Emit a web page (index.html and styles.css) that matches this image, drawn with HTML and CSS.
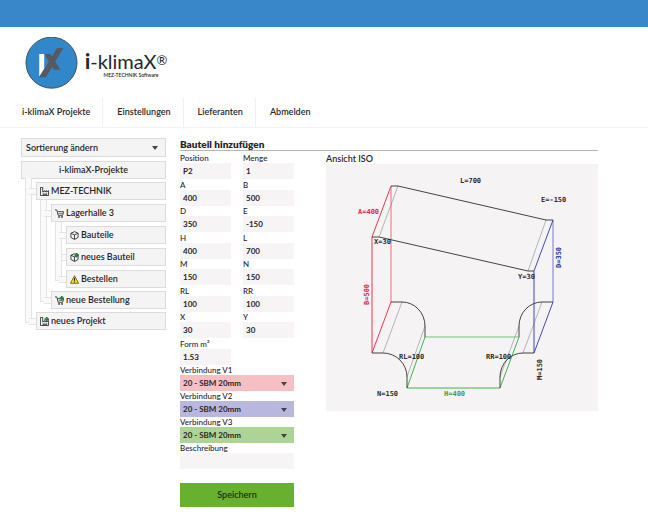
FILE: index.html
```html
<!DOCTYPE html>
<html lang="de">
<head>
  <meta charset="UTF-8" />
  <meta name="viewport" content="width=device-width, initial-scale=1.0" />
  <title>i-klimaX</title>
  <link rel="stylesheet" href="styles.css">
</head>
<body>

  <!-- shared icon shapes -->
  <svg class="sprite" aria-hidden="true">
    <symbol id="factory" viewBox="0 0 10 10">
      <path d="M0.5 0.5v9h9v-5.5l-2 1.5v-1.5l-2 1.5v-1.5l-2.5 1.5v-5z" fill="none" stroke="#333" />
      <path d="M3 7h1M5 7h1M7 7h1M3 8.5h5" stroke="#333" />
    </symbol>
    <symbol id="cart" viewBox="0 0 10 10">
      <path d="M0 1h2l1.5 6h5l1-4h-6.5" fill="none" stroke="#333" />
      <path d="M4 5h5" stroke="#777" />
      <circle cx="4.5" cy="8.8" r="1" fill="#333" />
      <circle cx="7.8" cy="8.8" r="1" fill="#333" />
    </symbol>
    <symbol id="cube" viewBox="0 0 10 10">
      <path d="M1 2.5l4-1.8l4 1.8v4.7l-4 2.2l-4-2.2zM1 2.5l4 1.8l4-1.8M5 4.3v5" fill="none" stroke="#333" stroke-linejoin="round" />
    </symbol>
    <symbol id="plus" viewBox="0 0 10 10">
      <path d="M7.5 0v5M5 2.5h5" stroke="#24803a" stroke-width="2" />
    </symbol>
    <symbol id="warning" viewBox="0 0 10 10">
      <path d="M5 0.8l4.5 8.4h-9z" fill="#f5e51b" stroke="#6b6716" stroke-linejoin="round" />
      <path d="M5 3v3.4M5 7.2v1.2" stroke="#222" stroke-width="1.2" />
    </symbol>
  </svg>

  <div class="topbar"></div>

  <header class="header">
    <svg class="logo" viewBox="0 0 160 156" aria-hidden="true">
      <circle cx="80" cy="77" r="77" fill="#3087ca" stroke="#45505a" stroke-width="3" />
      <path d="M43 51h15v44l-15 24z" fill="#fff" />
      <path d="M97 33h19l-53 88h-20z" fill="#565a60" />
      <path d="M59 51h18l30 47h-20z" fill="#565a60" />
    </svg>
    <div class="brand">
      <span class="brand-name"><b>i</b>-klimaX<span class="reg">®</span></span>
      <span class="brand-sub">MEZ-TECHNIK Software</span>
    </div>
  </header>

  <nav class="nav">
    <a href="#projekte">i-klimaX Projekte</a>
    <a href="#einstellungen">Einstellungen</a>
    <a href="#lieferanten">Lieferanten</a>
    <a href="#abmelden">Abmelden</a>
  </nav>

  <main class="page">
    <aside class="sidebar">
      <div class="select sort">
        <select aria-label="Sortierung ändern">
          <option>Sortierung ändern</option>
        </select>
      </div>
      <a class="node root" href="#projekte">i-klimaX-Projekte</a>
      <ul class="tree">
        <li>
          <a class="node" href="#mez"><svg><use href="#factory" /></svg>MEZ-TECHNIK</a>
          <ul class="tree">
            <li>
              <a class="node" href="#lagerhalle"><svg><use href="#cart" /></svg>Lagerhalle 3</a>
              <ul class="tree leaves">
                <li><a class="node" href="#bauteile"><svg><use href="#cube" /></svg>Bauteile</a></li>
                <li><a class="node" href="#neues-bauteil"><svg><use href="#cube" /><use href="#plus" /></svg>neues Bauteil</a></li>
                <li><a class="node" href="#bestellen"><svg><use href="#warning" /></svg>Bestellen</a></li>
              </ul>
            </li>
            <li><a class="node" href="#neue-bestellung"><svg><use href="#cart" /><use href="#plus" /></svg>neue Bestellung</a></li>
          </ul>
        </li>
        <li><a class="node" href="#neues-projekt"><svg><use href="#factory" /><use href="#plus" /></svg>neues Projekt</a></li>
      </ul>
    </aside>

    <section class="content">
      <h1>Bauteil hinzufügen</h1>
      <div class="columns">
        <form class="form">
          <div class="fields">
            <div class="field"><label for="position">Position</label><input id="position" value="P2"></div>
            <div class="field"><label for="menge">Menge</label><input id="menge" value="1"></div>
            <div class="field"><label for="a">A</label><input id="a" value="400"></div>
            <div class="field"><label for="b">B</label><input id="b" value="500"></div>
            <div class="field"><label for="d">D</label><input id="d" value="350"></div>
            <div class="field"><label for="e">E</label><input id="e" value="-150"></div>
            <div class="field"><label for="h">H</label><input id="h" value="400"></div>
            <div class="field"><label for="l">L</label><input id="l" value="700"></div>
            <div class="field"><label for="m">M</label><input id="m" value="150"></div>
            <div class="field"><label for="n">N</label><input id="n" value="150"></div>
            <div class="field"><label for="rl">RL</label><input id="rl" value="100"></div>
            <div class="field"><label for="rr">RR</label><input id="rr" value="100"></div>
            <div class="field"><label for="x">X</label><input id="x" value="30"></div>
            <div class="field"><label for="y">Y</label><input id="y" value="30"></div>
            <div class="field"><label for="form">Form m²</label><input id="form" value="1.53"></div>
          </div>
          <div class="field">
            <label for="v1">Verbindung V1</label>
            <div class="select red"><select id="v1"><option>20 - SBM 20mm</option></select></div>
          </div>
          <div class="field">
            <label for="v2">Verbindung V2</label>
            <div class="select blue"><select id="v2"><option>20 - SBM 20mm</option></select></div>
          </div>
          <div class="field">
            <label for="v3">Verbindung V3</label>
            <div class="select green"><select id="v3"><option>20 - SBM 20mm</option></select></div>
          </div>
          <div class="field">
            <label for="beschreibung">Beschreibung</label>
            <input id="beschreibung" value="">
          </div>
          <button class="save" type="button">Speichern</button>
        </form>

        <figure class="view">
          <figcaption>Ansicht ISO</figcaption>
          <svg class="iso" viewBox="0 0 272 247">
            <g class="thin">
              <path d="M72 22L53 73M220 56L202 107M76 138L57 189M99 162L81 213M216 138L197 189M193 162L174 213" />
            </g>
            <g class="line-red">
              <path class="back" d="M65 22V138" />
              <path d="M65 22L46 73V189L65 138" />
            </g>
            <g class="line-green">
              <path class="back" d="M99 173H193" />
              <path d="M99 173L81 224H174L193 173" />
            </g>
            <g class="line-blue">
              <path class="back" d="M227 56V138" />
              <path d="M227 56L208 107V189L227 138" />
            </g>
            <g class="line-black">
              <path d="M65 22H72L220 56H227M46 73H53L202 107H208" />
              <path d="M65 138H76A23 24 0 0 1 99 162V173M46 189H57A24 24 0 0 1 81 213V224" />
              <path d="M227 138H216A23 24 0 0 0 193 162V173M208 189H197A23 24 0 0 0 174 213V224" />
            </g>
            <text x="134" y="19">L=700</text>
            <text x="215" y="38">E=-150</text>
            <text x="48" y="80">X=30</text>
            <text x="192" y="115">Y=30</text>
            <text x="73" y="195">RL=100</text>
            <text x="160" y="195">RR=100</text>
            <text x="51" y="232">N=150</text>
            <text class="text-red" x="32" y="50">A=400</text>
            <text class="text-green" x="118" y="232">H=400</text>
            <text class="text-red" transform="translate(43 141) rotate(-90)">B=500</text>
            <text class="text-blue" transform="translate(235 104) rotate(-90)">D=350</text>
            <text transform="translate(216 216) rotate(-90)">M=150</text>
          </svg>
        </figure>
      </div>
    </section>
  </main>

</body>
</html>
```
FILE: styles.css
```css
* {
  margin: 0;
  padding: 0;
  box-sizing: border-box;
}
body {
  font-family: Lato, sans-serif;
  font-size: 9px;
  font-weight: 600;
  line-height: 10px;
  color: #26262b;
  background: #fff;
}
a {
  color: inherit;
  text-decoration: none;
}
input, select, button {
  font: inherit;
  color: inherit;
  border: none;
  border-radius: 0;
}
.sprite {
  display: none;
}
.topbar {
  height: 27px;
  background: #3986c9;
}

/* header */
.header {
  display: flex;
  align-items: center;
  gap: 7px;
  padding: 10px 25px 9px;
}
.logo {
  width: 53px;
  height: 52px;
}
.brand {
  display: flex;
  flex-direction: column;
  padding-top: 2px;
}
.brand-name {
  font-size: 20px;
  font-weight: 400;
  line-height: 23px;
}
.brand-name b {
  font-weight: 900;
}
.reg {
  font-size: 13px;
  line-height: 13px;
  vertical-align: 4px;
}
.brand-sub {
  align-self: flex-end;
  font-size: 5px;
  line-height: 5px;
  padding-right: 9px;
}
.nav {
  display: flex;
  padding: 0 8px;
  border-bottom: 1px solid #f3f3f3;
}
.nav a {
  padding: 9px 12px 10px 14px;
  border-right: 1px solid #f0f0f0;
}
.nav a:last-child {
  border-right: none;
}

/* page */
.page {
  display: flex;
  gap: 14px;
  padding: 10px 50px 20px 21px;
}
.sidebar {
  width: 145px;
  flex: none;
}
.select {
  position: relative;
  background: #f5f4f5;
}
.select select {
  display: block;
  width: 100%;
  height: 16px;
  padding: 0 16px 0 3px;
  background: none;
  appearance: none;
}
.select::after {
  content: "";
  position: absolute;
  top: 7px;
  right: 7px;
  border: 3px solid transparent;
  border-top: 4px solid #444;
  border-bottom: none;
  pointer-events: none;
}
.sort {
  margin-bottom: 4px;
  border: 1px solid #dcdcdc;
}
.sort select {
  height: 17px;
  padding-left: 4px;
}
.node {
  display: flex;
  align-items: center;
  gap: 2px;
  height: 18px;
  padding: 0 3px;
  background: #f5f4f5;
  border: 1px solid #dcdcdc;
}
.node svg {
  width: 9px;
  height: 9px;
}
.root {
  justify-content: center;
}
.tree {
  display: flex;
  flex-direction: column;
  gap: 3px;
  padding: 4px 0 0 15px;
  list-style: none;
}
.root + .tree {
  padding-top: 3px;
}
.leaves {
  gap: 4px;
}
.tree li {
  position: relative;
}
/* connector pipes between the nodes */
.tree li::before,
.tree li::after {
  content: "";
  position: absolute;
  background: #fafafa;
  border: 1px solid #e4e4e4;
}
.tree li::before {
  left: -11px;
  top: -4px;
  width: 5px;
  height: 15px;
  border-top: none;
}
.tree li:last-child::before {
  top: auto;
  bottom: 7px;
}
.tree > li:last-child:not(:first-child)::before {
  height: 28px;
}
.tree li::after {
  left: -7px;
  top: 6px;
  width: 7px;
  height: 5px;
  border-width: 1px 0;
}
.tree > li:first-child:not(:last-child)::before {
  height: auto;
  bottom: -8px;
}

/* form */
.content {
  flex: 1;
  min-width: 0;
}
h1 {
  font-size: 10px;
  font-weight: 800;
  line-height: 12px;
  border-bottom: 1px solid #b5b5b5;
}
.columns {
  display: flex;
  align-items: flex-start;
  gap: 32px;
}
.form {
  width: 114px;
  flex: none;
  padding-top: 2px;
}
.fields {
  display: grid;
  grid-template-columns: 1fr 1fr;
  grid-auto-rows: 1fr;
  column-gap: 12px;
  min-height: 212px;
}
label {
  display: block;
  font-size: 8px;
  font-weight: 500;
}
.field input,
.field select {
  font-size: 8px;
  font-weight: 700;
}
.field input {
  display: block;
  width: 100%;
  height: 16px;
  padding: 0 3px;
  background: #f6f4f5;
}
.red {
  background: #f6bfc3;
}
.blue {
  background: #bab7df;
}
.green {
  background: #add494;
}
.save {
  width: 100%;
  height: 24px;
  margin-top: 14px;
  background: #68b12e;
  cursor: pointer;
}

/* iso view */
.view {
  flex: 1;
  min-width: 0;
  padding-top: 3px;
}
figcaption {
  font-size: 9px;
}
.iso {
  display: block;
  width: 100%;
  background: #f5f3f4;
}
.iso path {
  fill: none;
  stroke-width: 1;
}
.iso .back {
  opacity: 0.7;
}
.thin {
  stroke: #b5b5b5;
}
.line-red {
  stroke: #e8384f;
}
.line-green {
  stroke: #3fb54a;
}
.line-blue {
  stroke: #4348b0;
}
.line-black {
  stroke: #444;
}
.iso text {
  font-family: "DejaVu Sans Mono", monospace;
  font-size: 7px;
  font-weight: 700;
  fill: #2b2b2b;
}
.iso .text-red {
  fill: #e0283f;
}
.iso .text-green {
  fill: #2fa83c;
}
.iso .text-blue {
  fill: #3034a0;
}
```
